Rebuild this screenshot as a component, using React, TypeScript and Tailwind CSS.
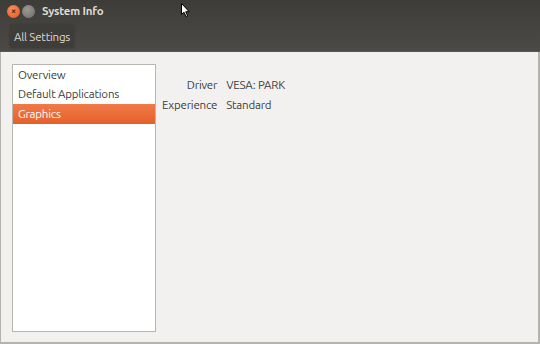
import React from "react";

const font = { fontFamily: "Ubuntu, 'Noto Sans', 'DejaVu Sans', sans-serif" };

export default function App() {
  return (
    <div className="relative w-[540px] h-[344px] bg-[#3c3b37] overflow-hidden" style={font}>
      <div className="flex flex-col h-full">
        {/* title bar */}
        <div className="h-[22px] flex items-center bg-gradient-to-b from-[#3d3c38] to-[#43423e] pl-[7px]">
          <div className="w-[13px] h-[13px] rounded-full bg-[radial-gradient(circle_at_40%_35%,#f8915c,#e2541f)] flex items-center justify-center text-[9px] leading-none text-[#5a2a10] font-bold">×</div>
          <div className="w-[13px] h-[13px] rounded-full ml-[2px] bg-[radial-gradient(circle_at_40%_35%,#9a9994,#6c6b67)]" />
          <span className="ml-[7px] text-[11.5px] font-bold text-[#dfdbd2] tracking-[-0.2px]">System Info</span>
        </div>
        {/* toolbar */}
        <div className="h-[30px] flex items-center bg-gradient-to-b from-[#43423e] to-[#4b4a46] pl-[10px] border-b border-[#5a5955]">
          <span className="text-[11.5px] text-[#dfdbd2] tracking-[-0.2px] px-[4px] py-[3px] rounded-[3px] bg-[#3e3d39] shadow-[0_0_3px_rgba(0,0,0,0.25)]">All Settings</span>
        </div>
        {/* body */}
        <div className="flex-1 flex bg-[#f2f1f0] border-l border-r-2 border-b-2 border-[#b5b3ae] pl-[11px] pt-[12px] pb-[10px] text-[11.5px] tracking-[-0.2px] text-[#3c3c3c]">
          <div className="w-[144px] bg-white border border-[#b9b7b2] flex flex-col">
            <div className="h-[19px] flex items-center pl-[5px]">Overview</div>
            <div className="h-[20px] flex items-center pl-[5px]">Default Applications</div>
            <div className="h-[20px] flex items-center pl-[5px] text-white bg-gradient-to-b from-[#f07a48] to-[#e5602a]">Graphics</div>
          </div>
          <div className="pl-[6px] pt-[13px]">
            <div className="grid grid-cols-[auto_auto] gap-x-[9px] gap-y-[4px] leading-[16px]">
              <span className="text-right">Driver</span>
              <span>VESA: PARK</span>
              <span className="text-right">Experience</span>
              <span>Standard</span>
            </div>
          </div>
        </div>
      </div>
      {/* mouse cursor */}
      <svg className="absolute left-[181px] top-[3px]" width="10" height="15" viewBox="0 0 10 15">
        <path d="M0.5 0.5 L0.5 11.5 L3 9.2 L5 13.5 L6.6 12.8 L4.7 8.7 L8.2 8.7 Z" fill="#fff" stroke="#000" strokeWidth="1" />
      </svg>
    </div>
  );
}
